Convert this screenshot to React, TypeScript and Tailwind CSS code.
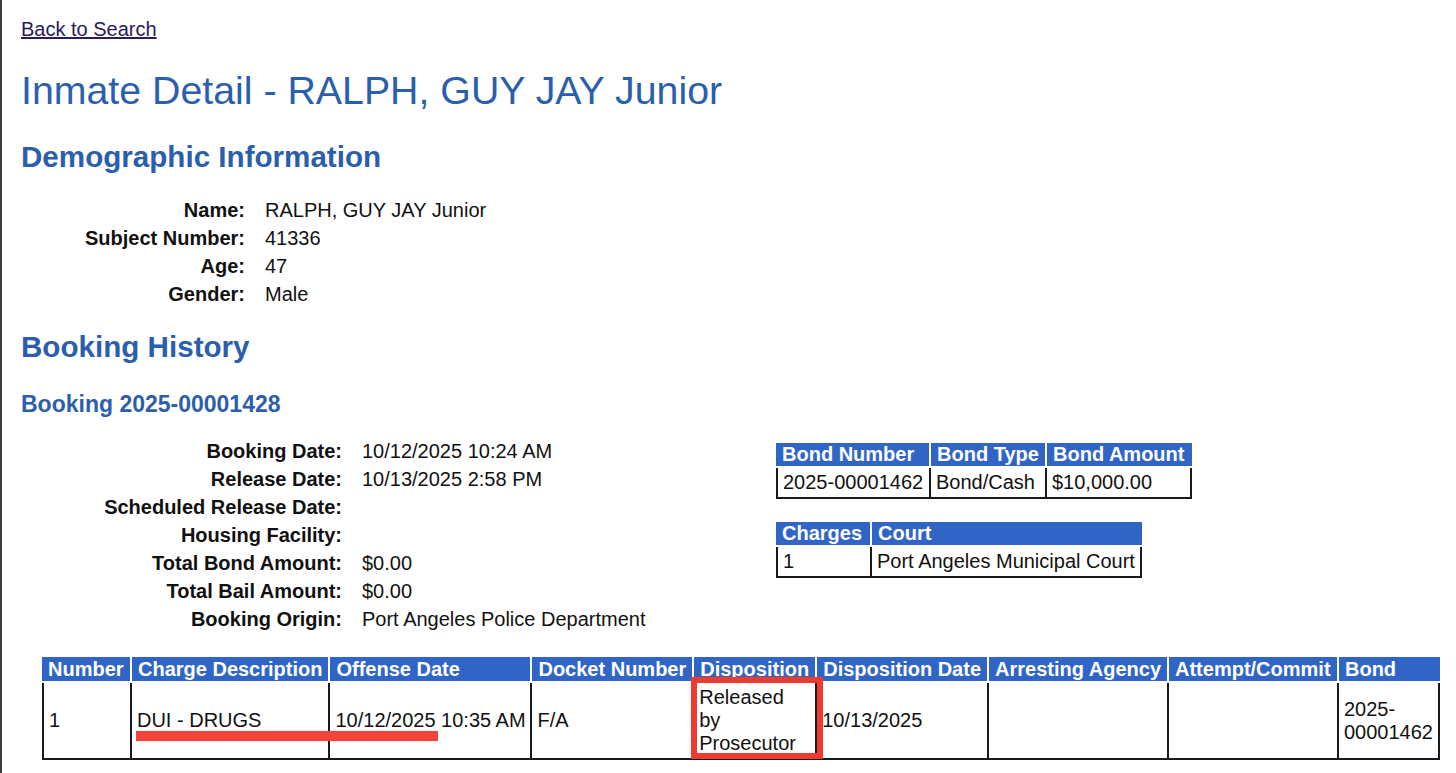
import React from "react";

type Col = { label: string; w: string; pr?: string };

const demographics = [
  ["Name:", "RALPH, GUY JAY Junior"],
  ["Subject Number:", "41336"],
  ["Age:", "47"],
  ["Gender:", "Male"],
];

const booking = [
  ["Booking Date:", "10/12/2025 10:24 AM"],
  ["Release Date:", "10/13/2025 2:58 PM"],
  ["Scheduled Release Date:", ""],
  ["Housing Facility:", ""],
  ["Total Bond Amount:", "$0.00"],
  ["Total Bail Amount:", "$0.00"],
  ["Booking Origin:", "Port Angeles Police Department"],
];

const bondCols: Col[] = [
  { label: "Bond Number", w: "w-[153px]" },
  { label: "Bond Type", w: "w-[116px]" },
  { label: "Bond Amount", w: "w-[147px]" },
];

const courtCols: Col[] = [
  { label: "Charges", w: "w-[94px]" },
  { label: "Court", w: "w-[272px]" },
];

const chargeCols: Col[] = [
  { label: "Number", w: "w-[88px]" },
  { label: "Charge Description", w: "w-[198px]" },
  { label: "Offense Date", w: "w-[205px]" },
  { label: "Docket Number", w: "w-[160px]" },
  { label: "Disposition", w: "w-[123px]", pr: "pr-[16px]" },
  { label: "Disposition Date", w: "w-[171px]" },
  { label: "Arresting Agency", w: "w-[180px]" },
  { label: "Attempt/Commit", w: "w-[170px]" },
  { label: "Bond", w: "w-[103px]" },
];

function DataTable({
  cols,
  row,
  headH,
  bodyH,
}: {
  cols: Col[];
  row: string[];
  headH: string;
  bodyH: string;
}) {
  return (
    <table className="table-fixed border-separate border-spacing-0">
      <thead>
        <tr>
          {cols.map((c, i) => (
            <th
              key={c.label}
              className={`${c.w} ${headH} whitespace-nowrap border-b-2 border-white bg-[#3065c5] px-[6px] py-0 text-left font-bold leading-[23px] text-white ${
                i > 0 ? "border-l-2" : ""
              }`}
            >
              {c.label}
            </th>
          ))}
        </tr>
      </thead>
      <tbody>
        <tr>
          {row.map((v, i) => (
            <td
              key={i}
              className={`${bodyH} border-b-2 border-l-2 border-[#1a1a1a] py-[3px] pl-[5px] align-middle leading-[23px] ${
                cols[i].pr ?? "pr-[4px]"
              } ${i === row.length - 1 ? "border-r-2" : ""}`}
            >
              {v}
            </td>
          ))}
        </tr>
      </tbody>
    </table>
  );
}

export default function App() {
  return (
    <div className="min-h-screen border-l-2 border-[#3d3d3d] bg-white pl-[19px] font-['Liberation_Sans',Arial,sans-serif] text-[20px] text-[#111]">
      <div className="pt-[17px] leading-[24px]">
        <a href="#" className="text-[#2b1a5c] underline">
          Back to Search
        </a>
      </div>

      <h1 className="mt-[26px] text-[39.3px] leading-[46px] text-[#2c5eae]">
        Inmate Detail - RALPH, GUY JAY Junior
      </h1>

      <h2 className="mt-[26px] text-[29.6px] font-bold leading-[36px] text-[#2c5eae]">
        Demographic Information
      </h2>

      <div className="mt-[21px] grid grid-cols-[224px_auto] gap-x-[20px] leading-[28px]">
        {demographics.map(([k, v]) => (
          <React.Fragment key={k}>
            <div className="text-right font-bold">{k}</div>
            <div>{v}</div>
          </React.Fragment>
        ))}
      </div>

      <h2 className="mt-[21px] text-[29.6px] font-bold leading-[36px] text-[#2c5eae]">
        Booking History
      </h2>

      <h3 className="mt-[25px] text-[23px] font-bold leading-[28px] text-[#2c5eae]">
        Booking 2025-00001428
      </h3>

      <div className="mt-[19px] flex">
        <div className="grid w-[755px] shrink-0 grid-cols-[321px_auto] content-start gap-x-[20px] leading-[28px]">
          {booking.map(([k, v]) => (
            <React.Fragment key={k}>
              <div className="text-right font-bold">{k}</div>
              <div>{v}</div>
            </React.Fragment>
          ))}
        </div>
        <div className="mt-[6px] flex flex-col items-start gap-[23px]">
          <DataTable
            cols={bondCols}
            row={["2025-00001462", "Bond/Cash", "$10,000.00"]}
            headH="h-[25px]"
            bodyH="h-[26px]"
          />
          <DataTable
            cols={courtCols}
            row={["1", "Port Angeles Municipal Court"]}
            headH="h-[25px]"
            bodyH="h-[29px]"
          />
        </div>
      </div>

      <div className="relative mt-[24px] ml-[21px] w-[1398px]">
        <DataTable
          cols={chargeCols}
          row={[
            "1",
            "DUI - DRUGS",
            "10/12/2025 10:35 AM",
            "F/A",
            "Released by Prosecutor",
            "10/13/2025",
            "",
            "",
            "2025-00001462",
          ]}
          headH="h-[26px]"
          bodyH="h-[77px]"
        />
        {/* annotations */}
        <div className="absolute left-[94px] top-[74px] h-[10px] w-[302px] bg-[#f2443a]" />
        <div className="absolute left-[649px] top-[20px] h-[82px] w-[132px] border-[6px] border-[#ee3b30]" />
      </div>
    </div>
  );
}
